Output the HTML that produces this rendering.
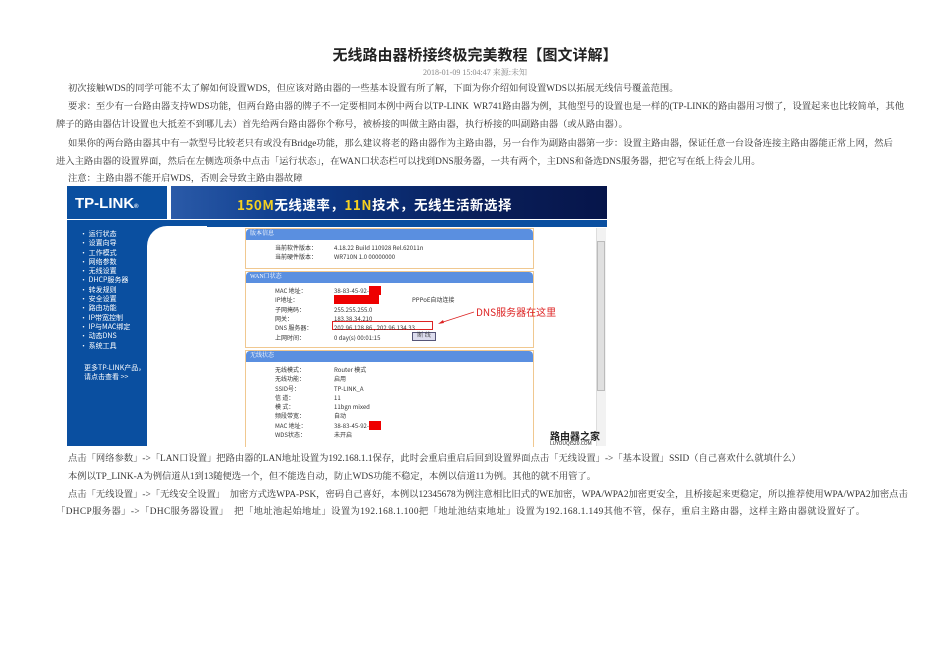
<!DOCTYPE html>
<html><head><meta charset="utf-8"><style>
body{margin:0;background:#fff;width:950px;height:672px;overflow:hidden;position:relative;font-family:"Liberation Serif","Noto Serif CJK SC",serif;color:#333}
.t{position:absolute;left:0;width:950px;text-align:center;top:44px;font-size:15px;font-weight:bold;font-family:"Liberation Sans","Noto Sans CJK SC",sans-serif;color:#222}
.d{position:absolute;left:0;width:950px;text-align:center;top:67px;font-size:8px;color:#888}
.p{position:absolute;left:68px;font-size:9.3px;white-space:nowrap;color:#333;line-height:12px}
.a{position:absolute;box-sizing:border-box}
.sb{position:absolute;left:80px;font-size:7px;color:#fff;font-family:"Noto Sans CJK SC",sans-serif}
.pn{position:absolute;left:245px;width:287px;border:1px solid #f0c890;background:#fff}
.ph{background:#5a8fe0;color:#fff;font-size:6px;height:11px;line-height:11px;padding-left:4px;border-radius:4px 4px 0 0}
.r{position:absolute;font-size:6px;color:#333;white-space:nowrap;font-family:"Noto Sans CJK SC",sans-serif}
</style></head><body>
<div class="t">无线路由器桥接终极完美教程【图文详解】</div>
<div class="d">2018-01-09 15:04:47 来源:未知</div>
<div class="p" style="top:83px">初次接触WDS的同学可能不太了解如何设置WDS，但应该对路由器的一些基本设置有所了解，下面为你介绍如何设置WDS以拓展无线信号覆盖范围。</div>
<div class="p" style="top:101px">要求：至少有一台路由器支持WDS功能，但两台路由器的牌子不一定要相同本例中两台以TP-LINK&nbsp; WR741路由器为例，其他型号的设置也是一样的(TP-LINK的路由器用习惯了，设置起来也比较简单，其他</div>
<div class="p" style="top:119px;left:56px">牌子的路由器估计设置也大抵差不到哪儿去）首先给两台路由器你个称号，被桥接的叫做主路由器，执行桥接的叫副路由器（或从路由器）。</div>
<div class="p" style="top:138px">如果你的两台路由器其中有一款型号比较老只有或没有Bridge功能，那么建议将老的路由器作为主路由器，另一台作为副路由器第一步：设置主路由器，保证任意一台设备连接主路由器能正常上网，然后</div>
<div class="p" style="top:156px;left:56px">进入主路由器的设置界面，然后在左侧选项条中点击「运行状态」，在WAN口状态栏可以找到DNS服务器，一共有两个，主DNS和备选DNS服务器，把它写在纸上待会儿用。</div>
<div class="p" style="top:173px">注意：主路由器不能开启WDS，否则会导致主路由器故障</div>

<div class="a" style="left:67px;top:186px;width:540px;height:260px;background:#fff;overflow:hidden">
 <div class="a" style="left:0;top:0;width:100px;height:33px;background:#0a4fa0;color:#fff;font:bold 15px 'Liberation Sans',sans-serif;padding:9px 0 0 8px">TP-LINK<span style="font-size:6px">®</span></div>
 <div class="a" style="left:104px;top:0;width:436px;height:33px;background:linear-gradient(90deg,#2a5aa8,#0c3a8a 30%,#0a1f5a 70%,#06154a);color:#fff;font:bold 13.5px 'Noto Sans CJK SC',sans-serif;padding:8px 0 0 66px;letter-spacing:0.5px"><span style="color:#f5d020">150M</span>无线速率，<span style="color:#f5d020">11N</span>技术，无线生活新选择</div>
 <div class="a" style="left:0;top:34px;width:540px;height:7px;background:#0a4fa0"></div>
 <div class="a" style="left:0;top:40px;width:80px;height:220px;background:#0a4fa0"></div>
 <div class="a" style="left:78px;top:40px;width:40px;height:40px;background:#0a4fa0"></div>
 <div class="a" style="left:80px;top:40px;width:60px;height:60px;background:#fff;border-radius:20px 0 0 0"></div>
 <div class="a" style="left:529px;top:42px;width:10px;height:218px;background:#f2f2f2;border-left:1px solid #ddd"></div>
 <div class="a" style="left:530px;top:55px;width:8px;height:150px;background:#e0e0e0;border:1px solid #bbb"></div>
</div>
<div class="sb" style="top:230px;line-height:9.3px">• 运行状态<br>• 设置向导<br>• 工作模式<br>• 网络参数<br>• 无线设置<br>• DHCP服务器<br>• 转发规则<br>• 安全设置<br>• 路由功能<br>• IP带宽控制<br>• IP与MAC绑定<br>• 动态DNS<br>• 系统工具</div>
<div class="sb" style="top:364px;left:84px;line-height:9px">更多TP-LINK产品，<br>请点击查看 &gt;&gt;</div>

<div class="pn" style="top:228px;height:39px"><div class="ph">版本信息</div></div>
<div class="r" style="left:275px;top:243px">当前软件版本：</div><div class="r" style="left:334px;top:243px">4.18.22 Build 110928 Rel.62011n</div>
<div class="r" style="left:275px;top:252px">当前硬件版本：</div><div class="r" style="left:334px;top:252px">WR710N 1.0 00000000</div>

<div class="pn" style="top:271px;height:75px"><div class="ph">WAN口状态</div></div>
<div class="r" style="left:275px;top:286px">MAC 地址：</div><div class="r" style="left:334px;top:286px">38-83-45-92-<span style="background:#e00;color:#e00">xxxx</span></div>
<div class="r" style="left:275px;top:295px">IP地址：</div><div class="r" style="left:334px;top:295px"><span style="background:#e00;color:#e00">xxxxxxxxxxxxxxx</span></div><div class="r" style="left:412px;top:295px">PPPoE自动连接</div>
<div class="r" style="left:275px;top:305px">子网掩码：</div><div class="r" style="left:334px;top:305px">255.255.255.0</div>
<div class="r" style="left:275px;top:314px">网关：</div><div class="r" style="left:334px;top:314px">183.38.34.210</div>
<div class="r" style="left:275px;top:323px">DNS 服务器：</div><div class="a" style="left:332px;top:321px;width:101px;height:9px;border:1px solid #d22"></div><div class="r" style="left:334px;top:323px">202.96.128.86 , 202.96.134.33</div>
<div class="r" style="left:275px;top:333px">上网时间：</div><div class="r" style="left:334px;top:333px">0 day(s) 00:01:15</div>
<div class="a" style="left:412px;top:332px;width:24px;height:9px;border:1px solid #557;background:#dde;font-size:6px;text-align:center;line-height:7px">断 线</div>
<svg class="a" style="left:436px;top:310px" width="40" height="16"><line x1="38" y1="2" x2="4" y2="13" stroke="#d22" stroke-width="0.8"/><path d="M2 14 L7 10 L8 13z" fill="#d22"/></svg>
<div class="r" style="left:476px;top:304px;font-size:10px;color:#d22">DNS服务器在这里</div>

<div class="pn" style="top:350px;height:96px;border-bottom:none"><div class="ph">无线状态</div></div>
<div class="r" style="left:275px;top:365px;line-height:9.3px">无线模式：<br>无线功能：<br>SSID号：<br>信 道：<br>模 式：<br>频段带宽：<br>MAC 地址：<br>WDS状态：</div>
<div class="r" style="left:334px;top:365px;line-height:9.3px">Router 模式<br>启用<br>TP-LINK_A<br>11<br>11bgn mixed<br>自动<br>38-83-45-92-<span style="background:#e00;color:#e00">xxxx</span><br>未开启</div>
<div class="r" style="left:550px;top:428px;font-size:10px;font-weight:bold;color:#222">路由器之家</div>
<div class="r" style="left:550px;top:440px;font-size:5px;color:#222">LUYOUQI520.COM</div>

<div class="p" style="top:453px">点击「网络参数」->「LAN口设置」把路由器的LAN地址设置为192.168.1.1保存，此时会重启重启后回到设置界面点击「无线设置」->「基本设置」SSID（自己喜欢什么就填什么）</div>
<div class="p" style="top:471px">本例以TP_LINK-A为例信道从1到13随便选一个，但不能选自动，防止WDS功能不稳定，本例以信道11为例。其他的就不用管了。</div>
<div class="p" style="top:489px">点击「无线设置」->「无线安全设置」&nbsp; 加密方式选WPA-PSK，密码自己喜好，本例以12345678为例注意相比旧式的WE加密，WPA/WPA2加密更安全，且桥接起来更稳定，所以推荐使用WPA/WPA2加密点击</div>
<div class="p" style="top:506px;left:56px;letter-spacing:0.4px">「DHCP服务器」->「DHC服务器设置」&nbsp; 把「地址池起始地址」设置为192.168.1.100把「地址池结束地址」设置为192.168.1.149其他不管，保存，重启主路由器，这样主路由器就设置好了。</div>
</body></html>
